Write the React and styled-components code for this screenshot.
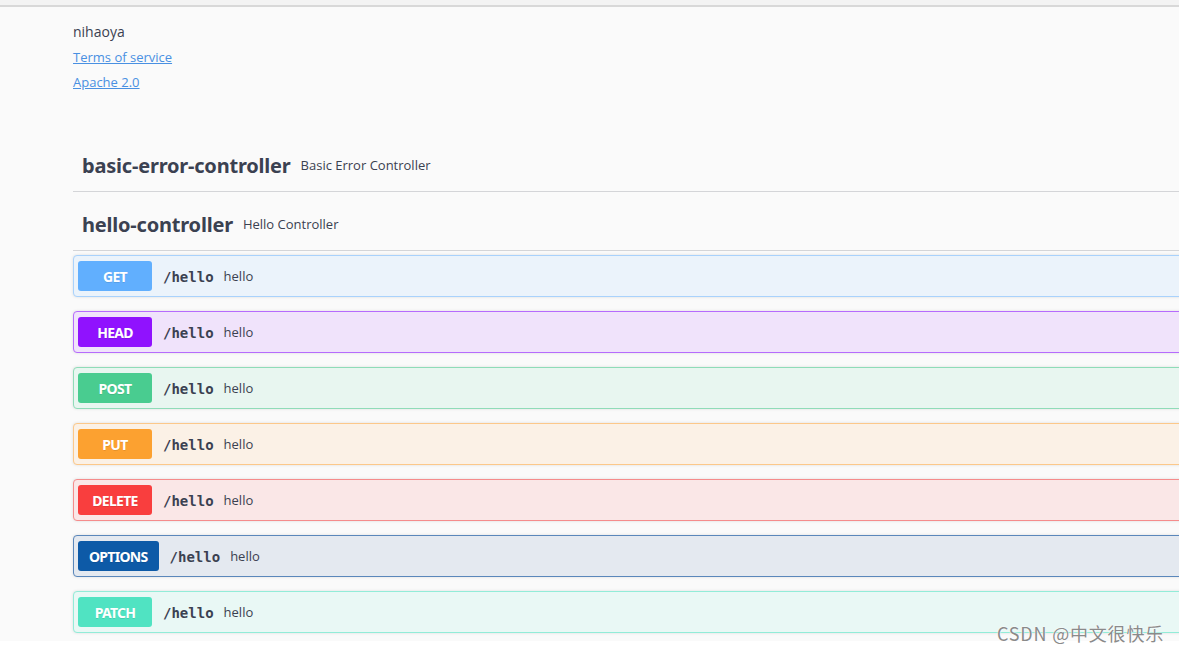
import React from "react";
import styled, { createGlobalStyle } from "styled-components";

const Global = createGlobalStyle`
  html, body { margin: 0; padding: 0; background: #ffffff; }
  body { overflow: hidden; font-family: "Open Sans", "Noto Sans", sans-serif; }
`;

const Page = styled.div`
  position: relative;
  width: 1179px;
  height: 652px;
  overflow: hidden;
  background: #ffffff;
`;

const Sheet = styled.div`
  height: 636px;
  background: #fafafa;
  border-top: 2px solid #d8d8d8;
  margin-top: 5px;
  box-sizing: border-box;
  display: flex;
  flex-direction: column;
`;

const TopStrip = styled.div`
  position: absolute;
  top: 0;
  left: 0;
  right: 0;
  height: 5px;
  background: #f3f3f3;
`;

const Content = styled.div`
  padding-left: 73px;
  margin-right: -40px;
  display: flex;
  flex-direction: column;
`;

const Info = styled.div`
  display: flex;
  flex-direction: column;
  gap: 6px;
  padding-top: 15px;
  color: #3b4151;
`;

const Contact = styled.div`
  font-size: 14px;
  line-height: 19px;
  margin-bottom: 1px;
  color: #3b4151;
`;

const Link = styled.a`
  font-size: 13px;
  line-height: 19px;
  color: #4990e2;
  text-decoration: underline;
  width: fit-content;
`;

const Tag = styled.div`
  display: flex;
  align-items: center;
  gap: 10px;
  height: 59px;
  padding: 6px 0 0 9px;
  box-sizing: border-box;
  border-bottom: 1px solid rgba(59, 65, 81, 0.2);
  margin-top: ${(p) => p.$mt || 0}px;
`;

const TagName = styled.span`
  font-family: "Noto Sans", "Open Sans", sans-serif;
  font-weight: 700;
  font-size: 20px;
  color: #3b4151;
  letter-spacing: -0.2px;
`;

const TagDesc = styled.span`
  font-size: 13px;
  color: #3b4151;
`;

const Ops = styled.div`
  display: flex;
  flex-direction: column;
  gap: 14px;
  margin-top: 4px;
`;

const Op = styled.div`
  display: flex;
  align-items: center;
  height: 42px;
  box-sizing: border-box;
  padding: 0 4px;
  border: 1px solid ${(p) => p.$border};
  border-radius: 4px;
  background: ${(p) => p.$bg};
  box-shadow: 0 0 3px rgba(0, 0, 0, 0.12);
`;

const Method = styled.span`
  min-width: 74px;
  height: 30px;
  padding: 0 11px;
  box-sizing: border-box;
  display: inline-flex;
  align-items: center;
  justify-content: center;
  border-radius: 3px;
  background: ${(p) => p.$color};
  color: #ffffff;
  font-family: "Noto Sans", "Open Sans", sans-serif;
  font-weight: 700;
  font-size: 14px;
  letter-spacing: -0.7px;
  text-shadow: 0 1px 0 rgba(0, 0, 0, 0.1);
`;

const Path = styled.span`
  margin-left: 11px;
  padding-top: 2px;
  font-family: "DejaVu Sans Mono", "Liberation Mono", monospace;
  font-weight: 700;
  font-size: 14px;
  color: #3b4151;
`;

const Desc = styled.span`
  margin-left: 10px;
  font-size: 13px;
  color: #3b4151;
`;

const Watermark = styled.div`
  position: absolute;
  right: 15px;
  bottom: 8px;
  font-family: "Noto Sans CJK SC", "Noto Sans", sans-serif;
  font-size: 18px;
  line-height: 22px;
  color: #8a8a8a;
  text-shadow: 0 0 2px #ffffff, 0 0 1px #ffffff;
  letter-spacing: 0.8px;
`;

const ops = [
  { m: "GET", c: "#61affe", bg: "#ebf3fb", b: "#a9d2fc" },
  { m: "HEAD", c: "#9012fe", bg: "#f0e3fb", b: "#b66bfd" },
  { m: "POST", c: "#49cc90", bg: "#e8f6f0", b: "#8fdcb8" },
  { m: "PUT", c: "#fca130", bg: "#fbf1e6", b: "#fcc88a" },
  { m: "DELETE", c: "#f93e3e", bg: "#fae7e7", b: "#f58c8c" },
  { m: "OPTIONS", c: "#0d5aa7", bg: "#e4e9f0", b: "#5a87bb" },
  { m: "PATCH", c: "#50e3c2", bg: "#e9f8f5", b: "#92ecd8" },
];

export default function App() {
  return (
    <>
      <Global />
      <Page>
        <TopStrip />
        <Sheet>
          <Content>
            <Info>
              <Contact>nihaoya</Contact>
              <Link href="#">Terms of service</Link>
              <Link href="#">Apache 2.0</Link>
            </Info>
            <Tag $mt={41}>
              <TagName>basic-error-controller</TagName>
              <TagDesc>Basic Error Controller</TagDesc>
            </Tag>
            <Tag>
              <TagName>hello-controller</TagName>
              <TagDesc>Hello Controller</TagDesc>
            </Tag>
            <Ops>
              {ops.map((o) => (
                <Op key={o.m} $bg={o.bg} $border={o.b}>
                  <Method $color={o.c}>{o.m}</Method>
                  <Path>/hello</Path>
                  <Desc>hello</Desc>
                </Op>
              ))}
            </Ops>
          </Content>
        </Sheet>
        <Watermark>CSDN @中文很快乐</Watermark>
      </Page>
    </>
  );
}
